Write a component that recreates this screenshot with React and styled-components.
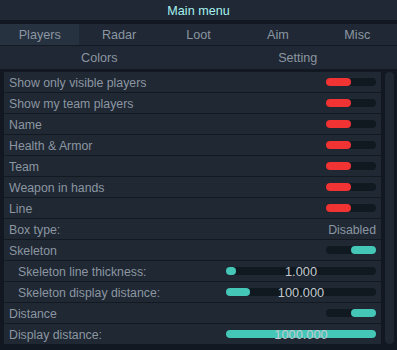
import React from "react";
import styled, { createGlobalStyle } from "styled-components";

const Colors = {
  backdrop: "#111821",
  bar: "#1f2834",
  active: "#263240",
  row: "#1f2833",
  line: "#121920",
  text: "#8c96a1",
  title: "#a6f2f0",
  red: "#f23333",
  teal: "#45c7b8",
  track: "#101820",
  value: "#c3c9cf",
};

const Global = createGlobalStyle`
  html, body {
    margin: 0;
    padding: 0;
    background: ${Colors.backdrop};
  }
  body {
    font-family: "Liberation Sans", Arial, sans-serif;
  }
`;

const Window = styled.div`
  width: 397px;
  height: 350px;
  background: ${Colors.backdrop};
  display: flex;
  flex-direction: column;
  overflow: hidden;
`;

const TitleBar = styled.div`
  height: 19px;
  padding-top: 1px;
  background: ${Colors.bar};
  color: ${Colors.title};
  font-size: 12.6px;
  display: flex;
  align-items: center;
  justify-content: center;
  margin-bottom: 4px;
`;

const TabRow = styled.div`
  display: grid;
  grid-template-columns: repeat(${props => props.count}, 1fr);
  height: ${props => props.h}px;
  background: ${Colors.bar};
  border-bottom: 1px solid ${Colors.line};
`;

const Tab = styled.div`
  display: flex;
  align-items: center;
  justify-content: center;
  font-size: 12.6px;
  color: ${Colors.text};
  background: ${props => (props.active ? Colors.active : "transparent")};
`;

const Body = styled.div`
  display: flex;
  margin-top: 2px;
  padding-left: 4px;
`;

const Panel = styled.div`
  width: 377px;
  display: flex;
  flex-direction: column;
`;

const Scrollbar = styled.div`
  width: 9px;
  height: 272px;
  margin-left: 4px;
  border-radius: 5px;
  background: ${Colors.row};
`;

const Row = styled.div`
  box-sizing: border-box;
  height: 21px;
  padding-top: 1px;
  display: flex;
  align-items: center;
  justify-content: space-between;
  padding-left: ${props => (props.sub ? 14 : 5)}px;
  padding-right: 5px;
  background: ${Colors.row};
  border-bottom: 1px solid ${Colors.line};
  color: ${Colors.text};
  font-size: 12.3px;
`;

const Label = styled.span`
  white-space: nowrap;
`;

const Track = styled.div`
  position: relative;
  width: ${props => props.w}px;
  height: 8px;
  margin-top: -1px;
  border-radius: 4px;
  background: ${Colors.track};
  display: flex;
  justify-content: ${props => (props.on ? "flex-end" : "flex-start")};
`;

const Fill = styled.div`
  height: 8px;
  border-radius: 4px;
  background: ${props => props.color};
`;

const Value = styled.span`
  position: absolute;
  inset: 0;
  top: 1px;
  display: flex;
  align-items: center;
  justify-content: center;
  color: ${Colors.value};
  font-size: 12.8px;
  line-height: 8px;
`;

const Toggle = ({ on }) =>
  <Track w={50} on={on}>
    <Fill color={on ? Colors.teal : Colors.red} style={{ width: 25 }} />
  </Track>

const Slider = ({ fill, value }) =>
  <Track w={150}>
    <Fill color={Colors.teal} style={{ width: fill }} />
    <Value>{value}</Value>
  </Track>

const tabs = ["Players", "Radar", "Loot", "Aim", "Misc"];

const rows = [
  { label: "Show only visible players", toggle: false },
  { label: "Show my team players", toggle: false },
  { label: "Name", toggle: false },
  { label: "Health & Armor", toggle: false },
  { label: "Team", toggle: false },
  { label: "Weapon in hands", toggle: false },
  { label: "Line", toggle: false },
  { label: "Box type:", text: "Disabled" },
  { label: "Skeleton", toggle: true },
  { label: "Skeleton line thickness:", sub: true, slider: { fill: 10, value: "1.000" } },
  { label: "Skeleton display distance:", sub: true, slider: { fill: 24, value: "100.000" } },
  { label: "Distance", toggle: true },
  { label: "Display distance:", slider: { fill: 150, value: "1000.000" } },
];

export default function App() {
  return (
    <Window>
      <Global />
      <TitleBar>Main menu</TitleBar>
      <TabRow count={5} h={21}>
        {tabs.map((t, i) => <Tab key={t} active={i === 0}>{t}</Tab>)}
      </TabRow>
      <TabRow count={2} h={23}>
        <Tab>Colors</Tab>
        <Tab>Setting</Tab>
      </TabRow>
      <Body>
        <Panel>
          {rows.map(r =>
            <Row key={r.label} sub={r.sub}>
              <Label>{r.label}</Label>
              {r.text ? <Label>{r.text}</Label>
                : r.slider ? <Slider {...r.slider} />
                : <Toggle on={r.toggle} />}
            </Row>
          )}
        </Panel>
        <Scrollbar />
      </Body>
    </Window>
  );
}
